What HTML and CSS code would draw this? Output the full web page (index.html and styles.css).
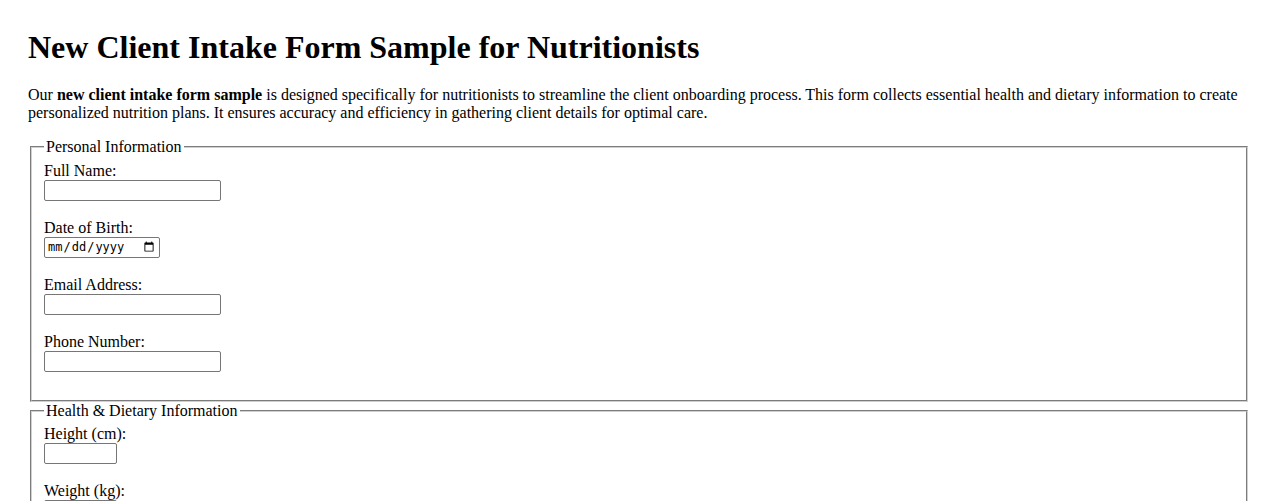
FILE: index.html
```html
<!DOCTYPE html>
<html lang="en">
<head>
  <meta charset="UTF-8">
  <title>New Client Intake Form Sample for Nutritionists</title>
  <meta name="viewport" content="width=device-width, initial-scale=1">
  <link rel="stylesheet" href="styles.css">
</head>
<body>

  <h1>New Client Intake Form Sample for Nutritionists</h1>

  <p>Our <strong>new client intake form sample</strong> is designed specifically for nutritionists to streamline the client onboarding process. This form collects essential health and dietary information to create personalized nutrition plans. It ensures accuracy and efficiency in gathering client details for optimal care.</p>

  <form class="intake-form">

    <fieldset>
      <legend>Personal Information</legend>
      <label for="full-name">Full Name:</label><br>
      <input type="text" id="full-name" name="full-name" class="field-text"><br><br>

      <label for="dob">Date of Birth:</label><br>
      <input type="date" id="dob" name="dob" class="field-date"><br><br>

      <label for="email">Email Address:</label><br>
      <input type="email" id="email" name="email" class="field-text"><br><br>

      <label for="phone">Phone Number:</label><br>
      <input type="tel" id="phone" name="phone" class="field-text"><br><br>
    </fieldset>

    <fieldset>
      <legend>Health &amp; Dietary Information</legend>
      <label for="height">Height (cm):</label><br>
      <input type="number" id="height" name="height" class="field-number"><br><br>

      <label for="weight">Weight (kg):</label><br>
      <input type="number" id="weight" name="weight" class="field-number"><br><br>

      <label for="allergies">Food Allergies:</label><br>
      <input type="text" id="allergies" name="allergies" class="field-text"><br><br>

      <label for="goals">Nutrition Goals:</label><br>
      <input type="text" id="goals" name="goals" class="field-text"><br><br>
    </fieldset>

  </form>

</body>
</html>
```

FILE: styles.css
```css
body {
  font-family: 'Liberation Serif', 'Times New Roman', serif;
  font-size: 16px;
  color: #000;
  background: #fff;
  margin: 0;
  padding: 29px 28px;
}

h1 {
  font-size: 32px;
  margin: 0 0 20px;
}

p {
  margin: 0 0 16px;
  line-height: 18px;
}

.intake-form fieldset {
  margin: 0 2px;
  padding: 0.35em 0.75em 0.625em;
  border: 2px groove #d0d0d0;
  line-height: 18px;
}

.intake-form legend {
  padding: 0 2px;
}

.intake-form input {
  box-sizing: border-box;
  height: 21px;
  border: 1px solid #767676;
  border-radius: 2px;
  padding: 1px 2px;
  font-family: 'Liberation Sans', Arial, sans-serif;
  font-size: 13px;
  vertical-align: bottom;
}

.field-text {
  width: 177px;
}

.field-date {
  width: 116px;
  font-family: 'DejaVu Sans Mono', 'Liberation Mono', monospace !important;
  font-size: 12px !important;
}

.field-number {
  width: 73px;
}
```
